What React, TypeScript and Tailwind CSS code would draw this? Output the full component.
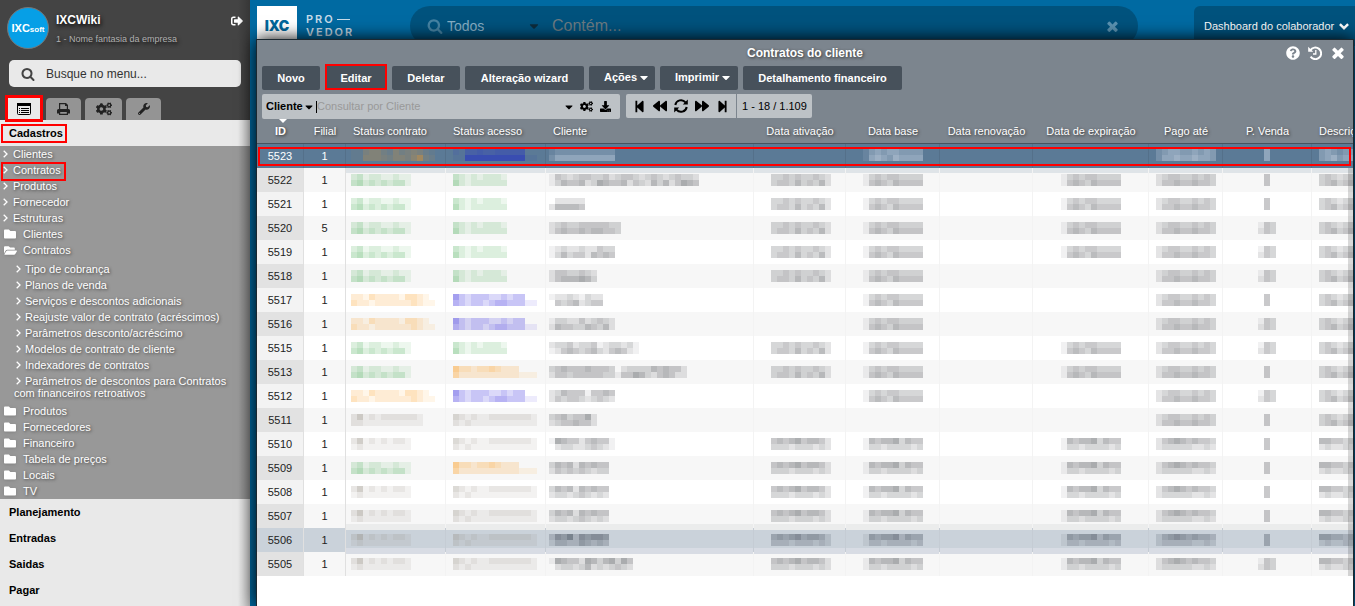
import React from 'react';
import {
  FaBackward,
  FaCaretDown,
  FaCogs,
  FaDownload,
  FaFolder,
  FaFolderOpen,
  FaForward,
  FaQuestionCircle,
  FaSignOutAlt,
  FaStepBackward,
  FaStepForward,
  FaWrench,
} from 'react-icons/fa';

type Tone = 'gray' | 'green' | 'orange' | 'blue' | 'tan' | 'white' | 'brown' | 'navy' | 'slate';

interface Blocks {
  tone: Tone;
  top: string;
  bottom: string;
}

interface Contract {
  id: string;
  branch: string;
  status: Blocks;
  access: Blocks;
  client: [string, string];
  activation?: boolean;
  base?: boolean;
  expiration?: boolean;
  wideSale?: boolean;
}

const TONES: Record<Tone, string> = {
  gray: '#77797d',
  green: '#4fae5c',
  orange: '#fca22c',
  blue: '#4a3fe0',
  tan: '#8b8478',
  white: '#dfe6f2',
  brown: '#a88a5a',
  navy: '#3548b4',
  slate: '#565f6c',
};

const ACTIVE: Blocks = { tone: 'green', top: '2312211211', bottom: '3423232331' };
const ACTIVE_ACCESS: Blocks = { tone: 'green', top: '321212221', bottom: '421222222' };
const PENDING: Blocks = { tone: 'orange', top: '2213222213321', bottom: '32212222223211' };
const WAITING: Blocks = { tone: 'orange', top: '53323343222', bottom: '42222222222111' };
const BLOCKED: Blocks = { tone: 'blue', top: '532333223233', bottom: '43233234433311' };
const OFF: Blocks = { tone: 'tan', top: '2412121221', bottom: '1211111111' };
const OFF_ACCESS: Blocks = { tone: 'tan', top: '32121122222221', bottom: '21211111111111' };

// Each digit is the strength of one 6px censor block
const contracts: Contract[] = [
  { id: '5523', branch: '1', status: { tone: 'brown', top: '11455325345421', bottom: '11555435546932' }, access: { tone: 'navy', top: '215565566666', bottom: '11999999999911' }, client: ['12222222222', '24444444444'], base: true },
  { id: '5522', branch: '1', status: ACTIVE, access: ACTIVE_ACCESS, client: ['1432344334234432343234332', '1354452365445243253524654'], activation: true, base: true, expiration: true },
  { id: '5521', branch: '1', status: ACTIVE, access: ACTIVE_ACCESS, client: ['.22222', '255554'], activation: true, base: true, expiration: true },
  { id: '5520', branch: '5', status: ACTIVE, access: ACTIVE_ACCESS, client: ['234334444433', '245445455443'], activation: true, base: true, expiration: true, wideSale: true },
  { id: '5519', branch: '1', status: ACTIVE, access: ACTIVE_ACCESS, client: ['12322322433', '13534425454'], activation: true, base: true, expiration: true, wideSale: true },
  { id: '5518', branch: '1', status: ACTIVE, access: ACTIVE_ACCESS, client: ['24433432', '24555653'], activation: true, base: true, wideSale: true },
  { id: '5517', branch: '1', status: PENDING, access: BLOCKED, client: ['122321322', '.43452344'], base: true },
  { id: '5516', branch: '1', status: PENDING, access: BLOCKED, client: ['13322423432', '25443354352'], base: true, wideSale: true },
  { id: '5515', branch: '1', status: ACTIVE, access: ACTIVE_ACCESS, client: ['233423341233231', '124543453245421'], activation: true, base: true, expiration: true, wideSale: true },
  { id: '5513', branch: '1', status: ACTIVE, access: WAITING, client: ['34544454443.23333545442', '24434444433144653245422'], activation: true, base: true, expiration: true },
  { id: '5512', branch: '1', status: PENDING, access: BLOCKED, client: ['23544414454', '24344323432'], base: true, wideSale: true },
  { id: '5511', branch: '1', status: { tone: 'tan', top: '241212222221', bottom: '221111111111' }, access: OFF_ACCESS, client: ['34534462', '23445442'] },
  { id: '5510', branch: '1', status: OFF, access: OFF_ACCESS, client: ['16544245441', '.2332234321'], activation: true, base: true, expiration: true },
  { id: '5509', branch: '1', status: ACTIVE, access: WAITING, client: ['3545254544', '2434343233'], activation: true, base: true, expiration: true },
  { id: '5508', branch: '1', status: OFF, access: OFF_ACCESS, client: ['3545254544', '2332343232'], activation: true, base: true, expiration: true },
  { id: '5507', branch: '1', status: OFF, access: OFF_ACCESS, client: ['3545254544', '2332343232'], activation: true, base: true, expiration: true },
  { id: '5506', branch: '1', status: OFF, access: OFF_ACCESS, client: ['3657365665', '2443354343'], activation: true, base: true, expiration: true },
  { id: '5505', branch: '1', status: OFF, access: OFF_ACCESS, client: ['16544265356364', '.2332352323432'], activation: true, base: true, expiration: true, wideSale: true },
];

const columns = [
  { label: 'ID', width: 'w-[47px]', cell: 'text-center font-bold' },
  { label: 'Filial', width: 'w-[42px]', cell: 'text-center' },
  { label: 'Status contrato', width: 'w-[100px]', cell: 'pl-[7px] text-left' },
  { label: 'Status acesso', width: 'w-[100px]', cell: 'pl-[7px] text-left' },
  { label: 'Cliente', width: 'w-[208px]', cell: 'pl-[7px] text-left' },
  { label: 'Data ativação', width: 'w-[92px]', cell: 'text-center' },
  { label: 'Data base', width: 'w-[94px]', cell: 'text-center' },
  { label: 'Data renovação', width: 'w-[93px]', cell: 'text-center' },
  { label: 'Data de expiração', width: 'w-[116px]', cell: 'text-center' },
  { label: 'Pago até', width: 'w-[74px]', cell: 'text-center' },
  { label: 'P. Venda', width: 'w-[89px]', cell: 'text-center' },
  { label: 'Descrição', width: '', cell: 'pl-[7px] text-left' },
];

const mainLinks = ['Clientes', 'Contratos', 'Produtos', 'Fornecedor', 'Estruturas'];

const contractLinks = [
  'Tipo de cobrança',
  'Planos de venda',
  'Serviços e descontos adicionais',
  'Reajuste valor de contrato (acréscimos)',
  'Parâmetros desconto/acréscimo',
  'Modelos de contrato de cliente',
  'Indexadores de contratos',
  'Parâmetros de descontos para Contratos com financeiros retroativos',
];

const folders = ['Produtos', 'Fornecedores', 'Financeiro', 'Tabela de preços', 'Locais', 'TV'];
const sections = ['Planejamento', 'Entradas', 'Saidas', 'Pagar'];

const SearchIcon = ({ className }: { className: string }) => (
  <svg viewBox="0 0 1792 1792" className={className} fill="currentColor">
    <path d="M1216 832q0-185-131.5-316.5t-316.5-131.5-316.5 131.5-131.5 316.5 131.5 316.5 316.5 131.5 316.5-131.5 131.5-316.5zm512 832q0 52-38 90t-90 38q-54 0-90-38l-343-342q-179 124-399 124-143 0-273.5-55.5t-225-150-150-225-55.5-273.5 55.5-273.5 150-225 225-150 273.5-55.5 273.5 55.5 225 150 150 225 55.5 273.5q0 220-124 399l343 343q37 37 37 90z" />
  </svg>
);

const CloseIcon = ({ className }: { className: string }) => (
  <svg viewBox="302 302 1188 1252" className={className} fill="currentColor">
    <path d="M1490 1322q0 40-28 68l-136 136q-28 28-68 28t-68-28l-294-294-294 294q-28 28-68 28t-68-28l-136-136q-28-28-28-68t28-68l294-294-294-294q-28-28-28-68t28-68l136-136q28-28 68-28t68 28l294 294 294-294q28-28 68-28t68 28l136 136q28 28 28 68t-28 68l-294 294 294 294q28 28 28 68z" />
  </svg>
);

const ListIcon = () => (
  <svg viewBox="0 0 14 12" className="w-3.5 h-3" fill="none" stroke="currentColor">
    <rect x=".5" y=".5" width="13" height="11" rx="1" />
    <path d="M0 1.5h14" strokeWidth="3" />
    <path d="M2 5.5h1M2 7.5h1M2 9.5h1M4 5.5h8M4 7.5h8M4 9.5h8" />
  </svg>
);

const PrintIcon = () => (
  <svg viewBox="0 0 13 12" className="w-[13px] h-3" fill="currentColor" fillRule="evenodd">
    <path d="M2 0h7l2 2v4h.5Q13 6 13 7.500V10.500h-2V12H2v-1.500H0V7.500Q0 6 1.500 6H2zM3.200 1.200v4.800h6.600V3H8V1.200zM3.200 9v1.800h6.600V9z" />
  </svg>
);

const RefreshIcon = () => (
  <svg viewBox="0 0 14 14" className="size-3.5" fill="none" stroke="currentColor" strokeWidth="2">
    <path d="M1.300 6A5.800 5.800 0 0 1 11.500 3.300M12.700 8A5.800 5.800 0 0 1 2.500 10.700" />
    <path d="M13.800 .6v5H8.800zM.2 13.400v-5h5z" fill="currentColor" stroke="none" />
  </svg>
);

const HistoryIcon = () => (
  <svg viewBox="0 0 14 14" className="size-3.5" fill="none" stroke="currentColor" strokeWidth="2">
    <path d="M2.400 4.300A5.800 5.800 0 1 1 2.600 10.700" />
    <path d="M.2 .8v5h5z" fill="currentColor" stroke="none" />
    <path d="M7.800 4v4H5" strokeWidth="1.300" />
  </svg>
);

const AngleIcon = ({ className }: { className: string }) => (
  <svg viewBox="0 0 5 8" className={`w-[5px] h-2 ${className}`} fill="none" stroke="currentColor" strokeWidth="1.300">
    <path d="M.7 .8L4 4L.7 7.200" />
  </svg>
);

const ChevronIcon = () => (
  <svg viewBox="0 0 10 7" className="ml-[5px] w-2.5 h-[7px] shrink-0" fill="none" stroke="currentColor" strokeWidth="2.400">
    <path d="M.9 1.100L5 5.200L9.100 1.100" />
  </svg>
);

const Highlight = ({ className }: { className: string }) => (
  <span className={`absolute border-[#f00] pointer-events-none ${className}`} />
);

const Mosaic = ({ tone, top, bottom }: Blocks) => {
  const count = Math.max(top.length, bottom.length);
  return (
    <svg width={count * 6} height="12" className="inline-block align-top" shapeRendering="crispEdges" aria-hidden="true">
      {[top, bottom].map((line, y) =>
        line.split('').map((level, x) =>
          level === '.' ? null : (
            <rect key={`${y}-${x}`} x={x * 6} y={y * 6} width="6" height="6" fill={TONES[tone]} fillOpacity={Number(level) / 10} />
          )
        )
      )}
    </svg>
  );
};

const Sidebar = () => (
  <aside className="w-[250px] shrink-0 flex flex-col bg-[#e9e9e9] relative">
    <div className="bg-[#444] h-[120px] flex flex-col">
      <div className="flex pl-[7px] pr-[7px] pt-[7px]">
        <div className="size-[42px] rounded-full bg-[#069fe6] border border-[#777] flex items-center justify-center text-white">
          <span className="text-[11px] leading-3 font-bold">IXC</span>
          <span className="text-[8px] leading-3 font-bold pt-[3px]">soft</span>
        </div>
        <div className="ml-[7px] flex-1 [text-shadow:1px_2px_4px_#000]">
          <h1 className="text-xs leading-4 pt-[5px] font-bold text-white">IXCWiki</h1>
          <p className="text-[9px] leading-4 pt-[3px] text-[#b0b0b0] whitespace-nowrap">1 - Nome fantasia da empresa</p>
        </div>
        <button aria-label="Sair" className="self-start pt-2 text-white">
          <FaSignOutAlt size={12} />
        </button>
      </div>
      <label className="mx-[9px] mt-[11px] h-[27px] rounded-[5px] bg-[#e9e9e9] flex items-center pl-3 text-[#444]">
        <SearchIcon className="size-[14px] shrink-0" />
        <input
          type="text"
          aria-label="Busque no menu"
          placeholder="Busque no menu..."
          className="ml-[11px] w-full bg-transparent text-xs placeholder-[#333] outline-none"
        />
      </label>
      <div className="flex items-end gap-1 pl-[7px] mt-[11px] text-[#222]">
        <button aria-label="Menu" className="relative mr-px w-[34px] h-[22px] bg-[#e9e9e9] text-black flex items-center justify-center">
          <ListIcon />
          <Highlight className="-left-0.5 -right-0.5 -top-[3px] -bottom-0.5 border-3" />
        </button>
        <button aria-label="Relatórios" className="w-[35px] h-[22px] rounded-t bg-[#949494] flex items-center justify-center">
          <PrintIcon />
        </button>
        <button aria-label="Configurações" className="w-[37px] h-[22px] rounded-t bg-[#949494] flex items-center justify-center">
          <FaCogs size={16} />
        </button>
        <button aria-label="Ferramentas" className="w-[35px] h-[22px] rounded-t bg-[#949494] flex items-center justify-center">
          <FaWrench size={12} />
        </button>
      </div>
    </div>

    <a href="#cadastros" className="relative block h-[26px] leading-[26px] pl-[9px] text-[11px] font-bold text-black">
      Cadastros
      <Highlight className="left-px top-1 w-[66px] h-[19px] border-2" />
    </a>
    <nav className="bg-[#989898] text-[11px] text-white [text-shadow:1px_1px_3px_#444]">
      {mainLinks.map(name => (
        <a key={name} href="#menu" className="relative flex items-center h-4 pl-[3px]">
          <AngleIcon className="mr-[5px]" />
          <span>{name}</span>
          {name === 'Contratos' && <Highlight className="left-px top-0 w-[65px] h-[19px] border-2" />}
        </a>
      ))}
      <a href="#clientes" className="flex items-center h-4 pl-1">
        <FaFolder size={12} className="drop-shadow" />
        <span className="ml-[7px]">Clientes</span>
      </a>
      <a href="#contratos" className="flex items-center h-4 pl-1">
        <FaFolderOpen size={13} className="drop-shadow" />
        <span className="ml-1.5">Contratos</span>
      </a>
      <div className="pt-[3px] pb-0.5 pl-3.5">
        {contractLinks.map(name => (
          <a key={name} href="#submenu" className="block py-0.5 pr-5 leading-3">
            <AngleIcon className="inline align-baseline ml-0.5 mr-1" />
            {name}
          </a>
        ))}
      </div>
      {folders.map(name => (
        <a key={name} href="#pasta" className="flex items-center h-4 pl-1">
          <FaFolder size={12} className="drop-shadow" />
          <span className="ml-[7px]">{name}</span>
        </a>
      ))}
    </nav>
    {sections.map(name => (
      <a key={name} href="#secao" className="block h-[26px] leading-[26px] pl-[9px] text-[11px] font-bold text-black">
        {name}
      </a>
    ))}
    <div className="absolute inset-y-0 right-0 w-3 bg-linear-to-l from-black/20 to-transparent pointer-events-none" />
  </aside>
);

const TopBar = () => (
  <header className="h-[39px] pt-1.5 pl-[7px] flex items-start">
    <div className="w-10 h-10 shrink-0 bg-white text-[#00679c] flex items-center justify-center">
      <span className="text-sm font-[900] font-[Inter,sans-serif]">IXC</span>
    </div>
    <div className="ml-[9px] w-[104px] shrink-0 pt-[7px] text-[#c7dbe8] text-[11px] leading-[13px] font-semibold font-[Inter,sans-serif] tracking-[2px]">
      <div className="flex items-center">
        PRO
        <span className="w-[13px] h-px bg-[#c7dbe8] ml-0.5" />
      </div>
      <div>VEDOR</div>
    </div>
    <div className="flex-1 h-10 rounded-full bg-[#00527d] flex items-center pl-[17px] pr-5">
      <SearchIcon className="size-4 shrink-0 text-[#4683a3]" />
      <div className="ml-1 w-[94px] shrink-0 flex items-center relative text-[#86aec4]">
        <select aria-label="Campo" className="appearance-none w-full text-sm outline-none bg-transparent">
          <option>Todos</option>
        </select>
        <FaCaretDown size={14} className="absolute right-0 text-[#0d2c3c] pointer-events-none" />
      </div>
      <input
        type="text"
        aria-label="Contém"
        placeholder="Contém..."
        className="ml-[11px] flex-1 min-w-0 bg-transparent text-base placeholder-[#6c7b82] outline-none"
      />
      <button aria-label="Limpar" className="text-[#5b93b2]">
        <CloseIcon className="size-[11px]" />
      </button>
    </div>
    <button className="ml-14 w-[161px] shrink-0 h-10 rounded-tl-md bg-[#00527d] flex items-center pl-2.5 text-[11px] text-white whitespace-nowrap">
      Dashboard do colaborador
      <ChevronIcon />
    </button>
  </header>
);

const toolButton = 'relative h-6 rounded-xs bg-[#47515b] text-white text-[11px] font-bold whitespace-nowrap';
const menuButton = 'pl-[15px] pb-0.5 flex items-center gap-[3px]';

const Toolbar = () => (
  <div className="flex gap-[5px] pl-[5px]">
    <button className={`${toolButton} w-[58px]`}>Novo</button>
    <button className={`${toolButton} w-[62px]`}>
      Editar
      <Highlight className="left-0 right-0 -top-0.5 bottom-0 border-2" />
    </button>
    <button className={`${toolButton} w-[68px]`}>Deletar</button>
    <button className={`${toolButton} w-[119px]`}>Alteração wizard</button>
    <button className={`${toolButton} ${menuButton} w-[66px]`}>
      Ações <FaCaretDown size={13} className="w-2" />
    </button>
    <button className={`${toolButton} ${menuButton} w-[78px]`}>
      Imprimir <FaCaretDown size={13} className="w-2" />
    </button>
    <button className={`${toolButton} w-[159px]`}>Detalhamento financeiro</button>
  </div>
);

const FilterBar = () => (
  <div className="flex items-start pl-[5px] mt-1 text-black text-[11px]">
    <div className="w-[358px] h-[25px] rounded-xs bg-[#bdc2c6] flex items-center pl-1 pr-[9px]">
      <div className="relative flex items-center w-[47px]">
        <select aria-label="Campo de consulta" className="appearance-none w-full font-bold outline-none bg-transparent">
          <option>Cliente</option>
        </select>
        <FaCaretDown size={12} className="absolute right-0 w-2 pointer-events-none" />
      </div>
      <span className="ml-[3px] w-px h-3 bg-black" />
      <input
        type="text"
        aria-label="Consultar por Cliente"
        placeholder="Consultar por Cliente"
        className="flex-1 min-w-0 bg-transparent placeholder-[#999] outline-none"
      />
      <button aria-label="Opções">
        <FaCaretDown size={12} className="w-2" />
      </button>
      <button aria-label="Configurar" className="ml-[7px]">
        <FaCogs size={13} />
      </button>
      <button aria-label="Exportar" className="ml-[7px]">
        <FaDownload size={11} />
      </button>
    </div>
    <div className="ml-1.5 h-6 rounded-xs bg-[#bdc2c6] flex items-center">
      <div className="flex items-center justify-between w-[111px] h-6 pl-[7px] pr-[7px] border-r border-[#7c858e]">
        <button aria-label="Primeira">
          <FaStepBackward size={13} />
        </button>
        <button aria-label="Anterior">
          <FaBackward size={14} />
        </button>
        <button aria-label="Atualizar">
          <RefreshIcon />
        </button>
        <button aria-label="Próxima">
          <FaForward size={14} />
        </button>
        <button aria-label="Última">
          <FaStepForward size={13} />
        </button>
      </div>
      <span className="px-[5px] whitespace-nowrap">1 - 18 / 1.109</span>
    </div>
  </div>
);

const rowStyle = (id: string, index: number) => {
  if (id === '5523') return 'bg-[#5b7a96] text-white';
  if (id === '5506') return 'bg-[#cad2da]';
  return index % 2 ? 'bg-[#f7f7f7]' : 'bg-white';
};

// Rows next to a coloured one carry a few pixels of its tint
const tintStyle = (id: string) => {
  if (id === '5522') return 'bg-[linear-gradient(#dfe4e8_5px,transparent_5px)]';
  if (id === '5507') return 'bg-[linear-gradient(transparent_20px,#ebecec_20px)]';
  if (id === '5506') return 'bg-[linear-gradient(#ebecec_2px,transparent_2px,transparent_20px,#d8dce4_20px)]';
  if (id === '5505') return 'bg-[linear-gradient(#d8dce4_2px,transparent_2px)]';
  return '';
};

const ContractRow = ({ contract, index }: { contract: Contract; index: number }) => {
  const { id } = contract;
  const selected = id === '5523';
  const hovered = id === '5506';
  const tone: Tone = selected ? 'white' : hovered ? 'slate' : 'gray';
  const line = selected ? 'border-[#54708a]' : hovered ? 'border-[#c5ccd4]' : 'border-[#f3f3f3]';
  const inset = selected ? 'pt-[5px]' : 'pt-1.5';
  const cell = `h-6 p-0 ${inset} align-top leading-3 overflow-hidden whitespace-nowrap border-r ${line} ${tintStyle(id)}`;
  const idColor = selected || hovered ? '' : index % 2 ? 'bg-[#e2e2e2]' : 'bg-[#f3f3f3]';
  const keyLine = selected ? 'border-[#54708a]' : 'border-[#e0e0e0]';
  const late = index > 11;
  const date: Blocks = late
    ? { tone, top: '1545563544', bottom: '1332333323' }
    : { tone, top: '1343443333', bottom: '1454354444' };

  return (
    <tr className={rowStyle(id, index)}>
      <td className={`h-6 p-0 text-center border-r ${keyLine} ${idColor}`}>{id}</td>
      <td className={`h-6 p-0 text-center border-r ${keyLine}`}>{contract.branch}</td>
      <td className={`${cell} pl-[5px]`}>
        <Mosaic {...contract.status} />
      </td>
      <td className={`${cell} pl-[7px]`}>
        <Mosaic {...contract.access} />
      </td>
      <td className={`${cell} pl-[3px]`}>
        <Mosaic tone={tone} top={contract.client[0]} bottom={contract.client[1]} />
      </td>
      <td className={`${cell} pl-[17px]`}>
        {contract.activation && <Mosaic {...date} top={late ? '4545645542' : '3343433432'} bottom={late ? '3332333232' : '3443534352'} />}
      </td>
      <td className={`${cell} text-center`}>{contract.base && <Mosaic {...date} />}</td>
      <td className={cell} />
      <td className={`${cell} text-center`}>{contract.expiration && <Mosaic {...date} />}</td>
      <td className={`${cell} text-center`}>
        <Mosaic {...date} top={late ? '2456545443' : '2344334343'} bottom={late ? '2333332232' : '2445445443'} />
      </td>
      <td className={`${cell} text-center`}>
        <Mosaic tone={tone} top={contract.wideSale ? '143' : '.4.'} bottom={contract.wideSale ? '243' : '.4.'} />
      </td>
      <td className={`${cell} pl-[7px] border-r-0`}>
        <Mosaic tone={tone} top={late ? '554433' : '343233'} bottom={late ? '232232' : '345344'} />
      </td>
    </tr>
  );
};

const ContractsTable = () => (
  <div className="relative overflow-hidden">
    <table className="w-full table-fixed border-separate border-spacing-0 text-[11px] text-[#222]">
      <thead>
        <tr className="bg-[#7c858e] text-white">
          {columns.map(col => (
            <th
              key={col.label}
              className={`relative h-[25px] p-0 border-b border-[#475360] overflow-hidden whitespace-nowrap [text-shadow:1px_1px_3px_#333] ${col.label === 'ID' ? '' : 'font-normal'} ${col.width} ${col.cell}`}
            >
              {col.label === 'ID' && (
                <svg viewBox="0 0 8 4" className="absolute top-0 left-[22px] w-2 h-1" fill="white">
                  <path d="M0 0h8L4 4z" />
                </svg>
              )}
              {col.label}
            </th>
          ))}
        </tr>
      </thead>
      <tbody>
        {contracts.map((contract, i) => (
          <ContractRow key={contract.id} contract={contract} index={i} />
        ))}
      </tbody>
    </table>
    <Highlight className="left-px right-0.5 top-7 h-[19px] border-2" />
    <div className="absolute right-0 top-[49px] bottom-0 w-[5px] bg-black/15 pointer-events-none" />
  </div>
);

const App: React.FC = () => {
  return (
    <div className="flex min-h-screen bg-[#006aa2] font-['Liberation_Sans',Arial,sans-serif] overflow-hidden">
      <Sidebar />
      <div className="flex-1 min-w-0 flex flex-col">
        <TopBar />
        <main className="relative flex-1 ml-1.5 mr-px bg-white border border-b-0 border-[#1c2830] shadow-[0_0_16px_#000]">
          <div className="bg-[#7c858e]">
            <div className="relative h-[26px] flex items-center justify-center">
              <h2 className="text-xs font-bold text-white [text-shadow:1px_1px_3px_#333]">Contratos do cliente</h2>
              <div className="absolute right-[9px] top-0 h-[26px] flex items-center gap-2 text-white">
                <button aria-label="Ajuda">
                  <FaQuestionCircle size={14} />
                </button>
                <button aria-label="Histórico">
                  <HistoryIcon />
                </button>
                <button aria-label="Fechar" className="ml-0.5">
                  <CloseIcon className="size-3" />
                </button>
              </div>
            </div>
            <Toolbar />
            <FilterBar />
          </div>
          <ContractsTable />
        </main>
      </div>
    </div>
  );
};

export default App;
